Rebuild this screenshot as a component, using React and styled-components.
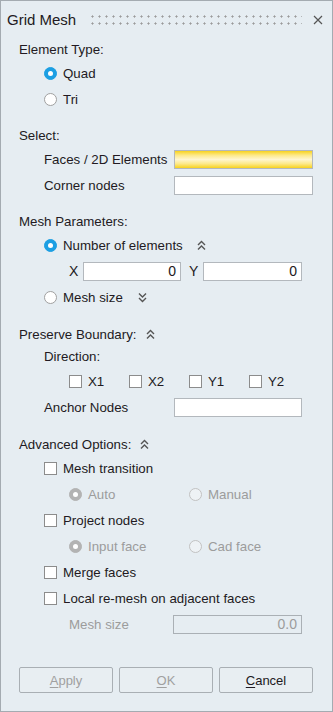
import React from 'react';
import styled, { createGlobalStyle } from 'styled-components';

const GlobalStyle = createGlobalStyle`
  html, body {
    margin: 0;
    padding: 0;
    background: #e6edf2;
  }
  body {
    font-family: "Liberation Sans", Arial, sans-serif;
  }
`;

const Panel = styled.div`
  width: 333px;
  height: 712px;
  box-sizing: border-box;
  border: 1px solid #a4abb1;
  background: #e6edf2;
  color: #221a22;
  font-size: 13.3px;
  display: flex;
  flex-direction: column;
`;

const TitleBar = styled.div`
  height: 37px;
  display: flex;
  align-items: center;
  padding: 0 9px 0 6px;
`;

const Title = styled.div`
  font-size: 15px;
  margin-right: 13px;
`;

const Grip = styled.div`
  flex: 1;
  height: 14px;
  margin-right: 11px;
  background-image: radial-gradient(circle, #9a9a9a 0.9px, transparent 1.2px);
  background-size: 7px 7px;
`;

const Close = styled.svg`
  width: 10px;
  height: 10px;
`;

const Body = styled.div`
  padding: 0 19px 0 18px;
  display: flex;
  flex-direction: column;
`;

const Section = styled.div`
  display: flex;
  flex-direction: column;
  margin-top: ${(p) => (p.$gap !== undefined ? p.$gap : 12)}px;
`;

const Heading = styled.div`
  height: ${(p) => p.$h || 22}px;
  display: flex;
  align-items: center;
  gap: 9px;
  padding-left: ${(p) => (p.$indent || 0) * 25}px;
`;

const Row = styled.div`
  height: 26px;
  display: flex;
  align-items: center;
  padding-left: ${(p) => (p.$indent || 0) * 25}px;
  color: ${(p) => (p.$disabled ? '#9c9c9c' : 'inherit')};
`;

const Label = styled.span`
  width: ${(p) => p.$w}px;
  flex-shrink: 0;
`;

const AxisLabel = styled.span`
  width: 14px;
  margin-left: ${(p) => (p.$gap ? '8px' : '0')};
  font-size: 14px;
`;

const Field = styled.div`
  width: ${(p) => p.$w}px;
  height: 19px;
  box-sizing: border-box;
  border: 1px solid ${(p) => (p.$disabled ? '#aab0b5' : '#b3b8bd')};
  background: ${(p) =>
    p.$highlight
      ? 'linear-gradient(#f7d21e 0%, #fde98a 25%, #fff6cf 50%, #fde98a 75%, #f7d21e 100%)'
      : p.$disabled
      ? '#e6edf2'
      : '#ffffff'};
  display: flex;
  align-items: center;
  justify-content: flex-end;
  padding-right: 4px;
  font-size: 14px;
  color: ${(p) => (p.$disabled ? '#9c9c9c' : '#221a22')};
`;

const RadioDot = styled.span`
  width: 13px;
  height: 13px;
  box-sizing: border-box;
  border-radius: 50%;
  margin-right: 6px;
  flex-shrink: 0;
  position: relative;
  background: ${(p) =>
    p.$checked ? (p.$disabled ? '#b3b3b3' : '#1c9fe3') : p.$disabled ? '#eef2f5' : '#ffffff'};
  border: 1px solid
    ${(p) => (p.$checked ? (p.$disabled ? '#b3b3b3' : '#1c9fe3') : p.$disabled ? '#c2c2c2' : '#a0a0a0')};

  &::after {
    content: '';
    display: ${(p) => (p.$checked ? 'block' : 'none')};
    position: absolute;
    left: 3px;
    top: 3px;
    width: 5px;
    height: 5px;
    border-radius: 50%;
    background: #ffffff;
  }
`;

const Box = styled.span`
  width: 13px;
  height: 13px;
  box-sizing: border-box;
  border: 1px solid #8c8c8c;
  background: #ffffff;
  margin-right: 6px;
  flex-shrink: 0;
`;

const Option = styled.span`
  display: flex;
  align-items: center;
  width: ${(p) => (p.$w ? `${p.$w}px` : 'auto')};
`;

const Chevron = styled.svg`
  width: 9px;
  height: 11px;
  margin-left: ${(p) => p.$offset || 0}px;
`;

const Footer = styled.div`
  margin-top: auto;
  padding: 0 19px 18px 18px;
  display: flex;
  gap: 6px;
`;

const Button = styled.div`
  flex: 1;
  height: 26px;
  box-sizing: border-box;
  border: 1px solid #a9afb4;
  border-radius: 2px;
  background: #e8eef2;
  display: flex;
  align-items: center;
  justify-content: center;
  font-size: 13px;
  color: ${(p) => (p.$disabled ? '#a0a0a0' : '#221a22')};

  u {
    text-decoration: underline;
    text-underline-offset: 2px;
  }
`;

const Radio = ({ checked, disabled, w, children }) => (
  <Option $w={w}>
    <RadioDot $checked={checked} $disabled={disabled} />
    {children}
  </Option>
);

const Check = ({ w, children }) => (
  <Option $w={w}>
    <Box />
    {children}
  </Option>
);

const DoubleChevron = ({ down, offset }) => (
  <Chevron $offset={offset} viewBox="0 0 9 11">
    <g fill="none" stroke="#555" strokeWidth="1.4">
      {down ? (
        <>
          <polyline points="1,1.5 4.5,5 8,1.5" />
          <polyline points="1,6 4.5,9.5 8,6" />
        </>
      ) : (
        <>
          <polyline points="1,5 4.5,1.5 8,5" />
          <polyline points="1,9.5 4.5,6 8,9.5" />
        </>
      )}
    </g>
  </Chevron>
);

const App = () => (
  <>
    <GlobalStyle />
    <Panel>
      <TitleBar>
        <Title>Grid Mesh</Title>
        <Grip />
        <Close viewBox="0 0 10 10">
          <path d="M1 1 L9 9 M9 1 L1 9" stroke="#555" strokeWidth="1.2" />
        </Close>
      </TitleBar>
      <Body>
        <Section $gap={0}>
          <Heading>Element Type:</Heading>
          <Row $indent={1}>
            <Radio checked>Quad</Radio>
          </Row>
          <Row $indent={1}>
            <Radio>Tri</Radio>
          </Row>
        </Section>

        <Section>
          <Heading>Select:</Heading>
          <Row $indent={1}>
            <Label $w={130}>Faces / 2D Elements</Label>
            <Field $w={139} $highlight />
          </Row>
          <Row $indent={1}>
            <Label $w={130}>Corner nodes</Label>
            <Field $w={139} />
          </Row>
        </Section>

        <Section>
          <Heading>Mesh Parameters:</Heading>
          <Row $indent={1}>
            <Radio checked>Number of elements</Radio>
            <DoubleChevron offset={14} />
          </Row>
          <Row $indent={2}>
            <AxisLabel>X</AxisLabel>
            <Field $w={98}>0</Field>
            <AxisLabel $gap>Y</AxisLabel>
            <Field $w={99}>0</Field>
          </Row>
          <Row $indent={1}>
            <Radio>Mesh size</Radio>
            <DoubleChevron down offset={15} />
          </Row>
        </Section>

        <Section $gap={13}>
          <Heading>
            Preserve Boundary:
            <DoubleChevron />
          </Heading>
          <Heading $indent={1} $h={23}>
            Direction:
          </Heading>
          <Row $indent={2}>
            <Check w={60}>X1</Check>
            <Check w={60}>X2</Check>
            <Check w={60}>Y1</Check>
            <Check w={60}>Y2</Check>
          </Row>
          <Row $indent={1}>
            <Label $w={130}>Anchor Nodes</Label>
            <Field $w={128} />
          </Row>
        </Section>

        <Section $gap={13}>
          <Heading>
            Advanced Options:
            <DoubleChevron />
          </Heading>
          <Row $indent={1}>
            <Check>Mesh transition</Check>
          </Row>
          <Row $indent={2} $disabled>
            <Radio w={120} checked disabled>
              Auto
            </Radio>
            <Radio disabled>Manual</Radio>
          </Row>
          <Row $indent={1}>
            <Check>Project nodes</Check>
          </Row>
          <Row $indent={2} $disabled>
            <Radio w={120} checked disabled>
              Input face
            </Radio>
            <Radio disabled>Cad face</Radio>
          </Row>
          <Row $indent={1}>
            <Check>Merge faces</Check>
          </Row>
          <Row $indent={1}>
            <Check>Local re-mesh on adjacent faces</Check>
          </Row>
          <Row $indent={2} $disabled>
            <Label $w={104}>Mesh size</Label>
            <Field $w={129} $disabled>
              0.0
            </Field>
          </Row>
        </Section>
      </Body>
      <Footer>
        <Button $disabled>
          <span>
            <u>A</u>pply
          </span>
        </Button>
        <Button $disabled>
          <span>
            <u>O</u>K
          </span>
        </Button>
        <Button>
          <span>
            <u>C</u>ancel
          </span>
        </Button>
      </Footer>
    </Panel>
  </>
);

export default App;
